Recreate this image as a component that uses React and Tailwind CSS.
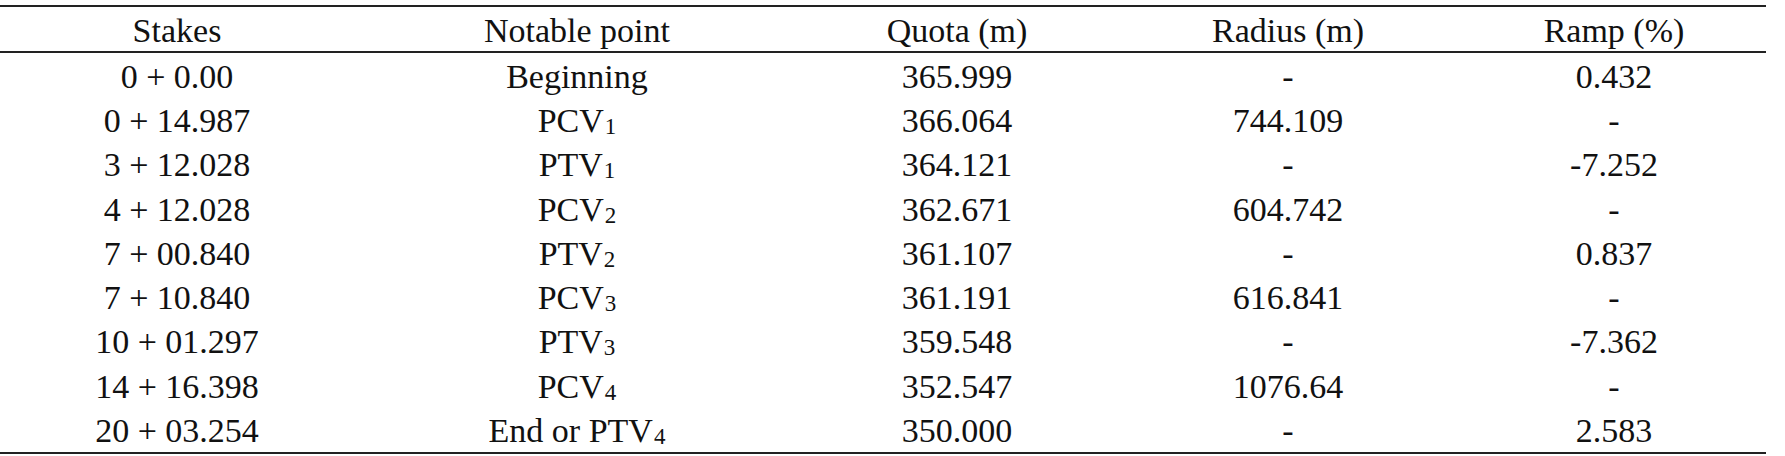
const rows = [
    ['0 + 0.00', ['Beginning'], '365.999', '-', '0.432'],
    ['0 + 14.987', ['PCV', '1'], '366.064', '744.109', '-'],
    ['3 + 12.028', ['PTV', '1'], '364.121', '-', '-7.252'],
    ['4 + 12.028', ['PCV', '2'], '362.671', '604.742', '-'],
    ['7 + 00.840', ['PTV', '2'], '361.107', '-', '0.837'],
    ['7 + 10.840', ['PCV', '3'], '361.191', '616.841', '-'],
    ['10 + 01.297', ['PTV', '3'], '359.548', '-', '-7.362'],
    ['14 + 16.398', ['PCV', '4'], '352.547', '1076.64', '-'],
    ['20 + 03.254', ['End or PTV', '4'], '350.000', '-', '2.583'],
];

const cols = 'grid grid-cols-[354px_446px_314px_348px_304px] items-center text-center pt-[3px]';

function Point({ p }) {
    return (
        <span>
            {p[0]}
            {p[1] && <sub className="text-[23px] -bottom-[2px] ml-[1px]">{p[1]}</sub>}
        </span>
    );
}

export default function App() {
    return (
        <div className="bg-white w-[1785px] h-[456px] pt-[5px] text-[#111] text-[34px] leading-none"
             style={{ fontFamily: '"Liberation Serif", "Times New Roman", serif' }}>
            <div className="w-[1766px] border-t-2 border-b-2 border-[#222]">
                <div className={`${cols} h-[46px] border-b-2 border-[#222]`}>
                    <div>Stakes</div>
                    <div>Notable point</div>
                    <div>Quota (m)</div>
                    <div>Radius (m)</div>
                    <div>Ramp (%)</div>
                </div>
                {rows.map((r) => (
                    <div key={r[0]} className={`${cols} h-[44.3px]`}>
                        <div>{r[0]}</div>
                        <div><Point p={r[1]} /></div>
                        <div>{r[2]}</div>
                        <div>{r[3]}</div>
                        <div>{r[4]}</div>
                    </div>
                ))}
            </div>
        </div>
    );
}
